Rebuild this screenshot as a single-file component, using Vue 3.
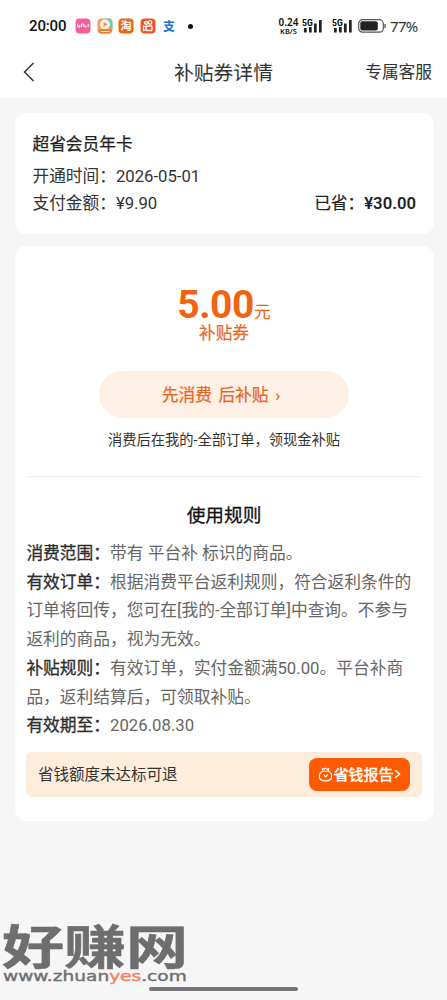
<script setup>
const rules = [
  { label: '消费范围：', lines: ['带有 平台补 标识的商品。'] },
  { label: '有效订单：', lines: ['根据消费平台返利规则，符合返利条件的', '订单将回传，您可在[我的-全部订单]中查询。不参与', '返利的商品，视为无效。'] },
  { label: '补贴规则：', lines: ['有效订单，实付金额满50.00。平台补商', '品，返利结算后，可领取补贴。'] },
  { label: '有效期至：', lines: ['2026.08.30'] },
]
</script>

<template>
  <div class="page">
    <header>
      <div class="status">
        <span class="time">20:00</span>
        <div class="apps">
          <svg viewBox="0 0 16 16"><rect x=".5" y=".5" width="15" height="15" rx="4" fill="#f4609b"/><path d="M2.700 6v3h2V6.700M6.400 9V6h2v3M10 6.500V9h1.700M13.200 6v3" fill="none" stroke="#fff" stroke-width="1"/></svg>
          <svg viewBox="0 0 16 16"><rect x=".5" y=".5" width="15" height="15" rx="4" fill="#efa064"/><path d="M8 .5h3.5a4 4 0 0 1 4 4V11L11 8z" fill="#69cfb2"/><circle cx="8" cy="6.5" r="5" fill="#fff3df"/><path d="M6.500 4l4 2.500-4 2.500z" fill="#ef8d43"/><path d="M1 12q7-2 14 0-.5 3.500-3.500 3.500h-7Q1.500 15.500 1 12" fill="#ed793b"/><path d="M3.500 13.500h9" stroke="#ffe4ce"/></svg>
          <svg viewBox="0 0 16 16"><rect x=".5" y=".5" width="15" height="15" rx="4" fill="#f26414"/><text x="8" y="12" text-anchor="middle" font-size="11" font-weight="700" fill="#fff">淘</text></svg>
          <svg viewBox="0 0 16 16"><rect x=".5" y=".5" width="15" height="15" rx="4" fill="#f45220"/><g fill="none" stroke="#fff" stroke-width="1.300"><circle cx="6" cy="4.800" r="1.500"/><circle cx="10" cy="4.500" r="1.800"/><rect x="6" y="8" width="6" height="4.500" rx="1"/><path d="M6 9L3.500 8v4.500L6 11.500"/></g></svg>
          <svg viewBox="0 0 16 16"><text x="8" y="12.500" text-anchor="middle" font-size="12" font-weight="700" fill="#2372cb">支</text></svg>
        </div>
        <i class="dot"></i>
        <div class="rate"><span>0.24</span><span>KB/S</span></div>
        <svg class="signal" viewBox="0 0 21 15"><text x="0" y="6.800" font-size="8.500" font-weight="700">5G</text><g fill="#222"><path d="M2 9h2.700v4.500H2zM7 8h2.700v5.500H7zM12 4.500h2.700v9H12zM17 1h2.700v12.500H17z"/></g></svg>
        <svg class="signal second" viewBox="0 0 21 15"><text x="0" y="6.800" font-size="8.500" font-weight="700">5G</text><g fill="#222"><path d="M2 9h2.700v4.500H2zM7 8h2.700v5.500H7zM12 4.500h2.700v9H12zM17 1h2.700v12.500H17z"/></g></svg>
        <svg class="battery" viewBox="0 0 28 14"><rect x=".7" y=".7" width="24.600" height="12.400" rx="3.800" fill="none" stroke="#555" stroke-width="1.200"/><rect x="2.300" y="2.300" width="17.500" height="9.200" rx="2" fill="#222"/><path d="M27 5v4" stroke="#555" stroke-width="1.300"/></svg>
        <span class="percent">77%</span>
      </div>
      <nav>
        <svg class="back" viewBox="0 0 12 20"><path d="M10.500 1L1.500 10l9 9" fill="none" stroke="#333" stroke-width="1.500"/></svg>
        <h1>补贴券详情</h1>
        <a>专属客服</a>
      </nav>
    </header>
    <main>
      <section class="card member">
        <h2>超省会员年卡</h2>
        <div>开通时间：2026-05-01</div>
        <div class="payment"><span>支付金额：¥9.90</span><strong>已省：<b>¥30.00</b></strong></div>
      </section>
      <section class="card coupon">
        <div class="amount"><b>5.00</b><span>元</span></div>
        <div class="type">补贴券</div>
        <button>先消费 后补贴 <span>›</span></button>
        <p class="hint">消费后在我的-全部订单，领现金补贴</p>
        <hr>
        <h3>使用规则</h3>
        <div class="rules">
          <p v-for="rule in rules" :key="rule.label"><b>{{ rule.label }}</b><template v-for="(line, i) in rule.lines" :key="i"><br v-if="i">{{ line }}</template></p>
        </div>
        <div class="refund">
          <span>省钱额度未达标可退</span>
          <div class="report">
            <svg class="bag" viewBox="0 0 16 16"><path d="M5.200 4.500L4.500 1.800l2.400.5L8 1.200l1.300 1.100 2.200-.5-.7 2.700M5.200 4.500h5.600M5.200 4.500C2.500 5.600 1.400 7.500 1.400 9.800c0 3.300 2.600 5 6.600 5s6.600-1.700 6.600-5c0-2.300-1.100-4.200-3.800-5.300M5.800 8L8 10.500 10.500 8" fill="none" stroke="#fff" stroke-width="1.200" stroke-linejoin="round"/></svg>
            <span>省钱报告</span>
            <svg class="arrow" viewBox="0 0 7 10"><path d="M1 1l4.500 4L1 9" fill="none" stroke="#fff" stroke-width="1.600"/></svg>
          </div>
        </div>
      </section>
    </main>
    <div class="watermark"><div class="brand">好赚网</div><div class="url">www.zhuan<span>yes</span>.com</div></div>
    <i class="home"></i>
  </div>
</template>

<style>
body { margin: 0; }
</style>
<style scoped>
* { box-sizing: border-box; }
.page { position: relative; width: 447px; height: 1000px; overflow: hidden; background: #f6f6f6; color: #333; font-family: Roboto, "Noto Sans CJK SC", sans-serif; }
header { height: 99px; background: #fff; border-bottom: 1px solid #f7f7f7; }
h1, h2, h3, p { margin: 0; font-weight: 400; }
svg { display: block; flex: none; }
.status { height: 46px; padding: 6px 0 0 29px; display: flex; align-items: center; color: #111; }
.time { width: 46px; font: 500 15px/20px Roboto; letter-spacing: -.15px; }
.apps { display: flex; gap: 5.500px; }
.apps svg { width: 16px; height: 16px; }
.dot { width: 5px; height: 5px; border-radius: 50%; background: #111; margin-left: 11px; }
.rate { width: 25px; margin-left: 83px; display: flex; flex-direction: column; align-items: center; font: 600 10px/9px "Noto Sans"; }
.rate span:last-child { font-size: 7.500px; line-height: 8px; }
.signal { width: 21px; height: 15px; margin-left: 1px; }
.second { margin-left: 8.500px; }
.battery { width: 28px; height: 14px; margin-left: 5.500px; }
.percent { margin-left: 4px; font: 15px/20px "Noto Sans"; letter-spacing: -.7px; color: #333; }
nav { display: flex; align-items: center; height: 52px; padding: 0 15px 0 23px; color: #333; }
.back { width: 12px; height: 20px; margin-right: 139px; }
h1 { width: 110px; padding-top: 3px; font-size: 19.800px; line-height: 30px; white-space: nowrap; }
nav a { margin-left: auto; padding-top: 2px; font-size: 16.700px; line-height: 24px; }
main { padding: 14px 13px 0 15px; }
.card { background: #fff; border-radius: 11px; }
.member { height: 121px; padding: 19px 18px 0 17.500px; font-size: 16.700px; line-height: 26.600px; }
h2 { font-size: 16.700px; line-height: 26px; -webkit-text-stroke: .25px; margin-bottom: 6px; color: #222; }
.payment { display: flex; justify-content: space-between; }
strong { font-weight: 400; -webkit-text-stroke: .2px; color: #222; }
.payment b { font-weight: 600; -webkit-text-stroke: 0; }
.coupon { margin-top: 12px; height: 575px; padding: 35px 12px 0 11px; text-align: center; }
.amount { height: 44px; display: flex; align-items: baseline; justify-content: center; color: #f06412; line-height: 48px; }
.amount b { font-size: 39px; letter-spacing: -.4px; }
.amount span { font-size: 16.700px; -webkit-text-stroke: .1px; }
.type { font-size: 16.700px; line-height: 24px; -webkit-text-stroke: .22px; color: #e9681e; margin-top: -3px; }
button { display: block; margin: 25px auto 0; width: 250px; height: 47px; padding: 2px 6px 0 0; border: 0; border-radius: 24px; background: #fff0e6; color: #e8651e; font: 400 16.700px/45px Roboto, "Noto Sans CJK SC", sans-serif; -webkit-text-stroke: .22px; word-spacing: 2.500px; }
.hint { font-size: 14.280px; line-height: 20px; margin-top: 12px; white-space: nowrap; }
hr { border: 0; height: 1px; margin: 26px 0 0; background: #eee; }
h3 { font-size: 18.700px; -webkit-text-stroke: .3px; line-height: 28px; margin-top: 25px; color: #111; }
.rules { text-align: left; margin-top: 9px; font-size: 16.740px; line-height: 28.700px; white-space: nowrap; color: #666; }
.rules b { font-weight: 400; -webkit-text-stroke: .3px; color: #2c2c2c; }
.rules p { padding-left: .4px; }
.refund { height: 45px; margin-top: 12px; border-radius: 6px; background: #ffeddc; display: flex; align-items: center; justify-content: space-between; padding: 0 12px; font-size: 15.500px; }
.refund > span { padding-bottom: 3px; }
.report { height: 33px; width: 101px; border-radius: 8px; background: #fe5b02; display: flex; align-items: center; justify-content: center; color: #fff; font-size: 14.900px; -webkit-text-stroke: .45px; }
.report span { padding-bottom: 2px; }
.bag { width: 15px; height: 15px; margin-right: 1px; }
.arrow { width: 7px; height: 10px; margin-left: 1px; }
.watermark { position: absolute; left: 2px; top: 919px; color: #6e6e6e; white-space: nowrap; }
.brand { height: 48px; font: 700 47px/50px "Noto Sans CJK SC"; -webkit-text-stroke: .5px #6e6e6e; transform: scaleX(1.320); transform-origin: left; }
.url { height: 16px; margin: 1px 0 0 1px; font: 400 14.500px/16px "DejaVu Sans"; -webkit-text-stroke: .4px; transform: scaleX(1.280); transform-origin: left; }
.url span { color: #f58060; }
.home { position: absolute; left: 149px; top: 987px; width: 149px; height: 4px; border-radius: 2px; background: #777; }
</style>
